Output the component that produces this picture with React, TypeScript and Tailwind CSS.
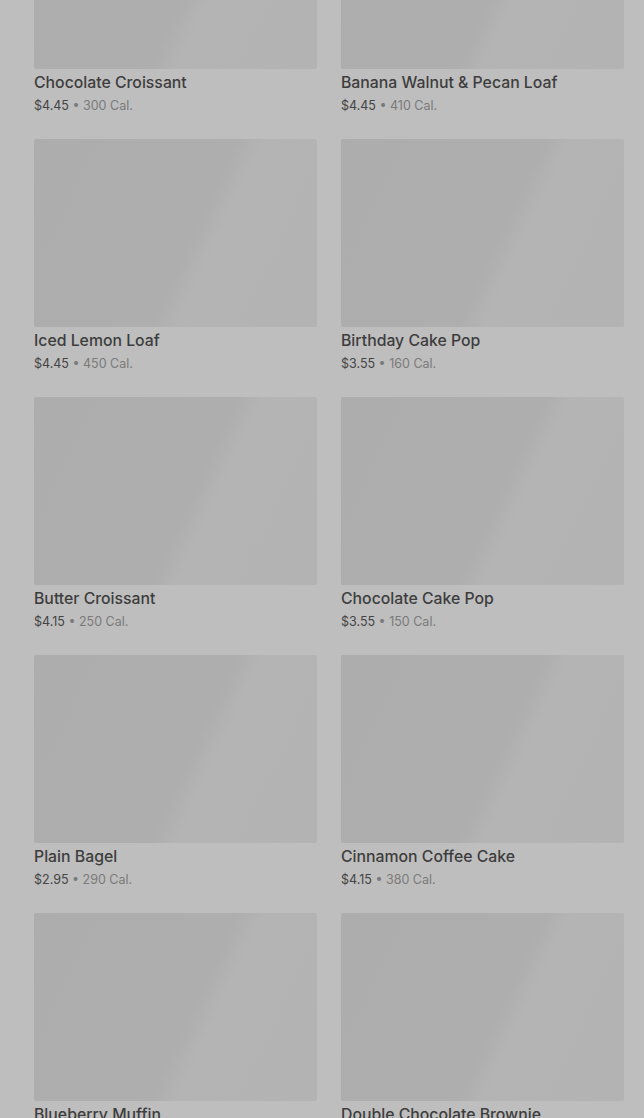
import React from "react";

const items = [
  ["Chocolate Croissant", "$4.45", "300 Cal."],
  ["Banana Walnut & Pecan Loaf", "$4.45", "410 Cal."],
  ["Iced Lemon Loaf", "$4.45", "450 Cal."],
  ["Birthday Cake Pop", "$3.55", "160 Cal."],
  ["Butter Croissant", "$4.15", "250 Cal."],
  ["Chocolate Cake Pop", "$3.55", "150 Cal."],
  ["Plain Bagel", "$2.95", "290 Cal."],
  ["Cinnamon Coffee Cake", "$4.15", "380 Cal."],
  ["Blueberry Muffin", "$3.25", "360 Cal."],
  ["Double Chocolate Brownie", "$3.95", "480 Cal."],
];

export default function App() {
  return (
    <div
      className="w-[644px] h-[1118px] overflow-hidden bg-[#bebebe]"
      style={{ fontFamily: "Inter, 'Noto Sans', sans-serif" }}
    >
      <div className="mt-[-119px] pl-[34px] pr-[20px] grid grid-cols-2 gap-x-[24px] gap-y-[23px]">
        {items.map(([name, price, cal]) => (
          <div key={name} className="flex flex-col">
            <div className="h-[188px] rounded-[2px] bg-[linear-gradient(115deg,#adadad_0%,#aeaeae_55%,#b4b4b4_62%,#b3b3b3_100%)]" />
            <div className="mt-[4px] h-[20px] leading-[20px] text-[15.8px] font-medium text-[#3d3d3d]">
              {name}
            </div>
            <div className="mt-[3px] h-[20px] leading-[20px] text-[12.5px] text-[#444]">
              {price}
              <span className="text-[#7a7a7a]"> • {cal}</span>
            </div>
          </div>
        ))}
      </div>
    </div>
  );
}
